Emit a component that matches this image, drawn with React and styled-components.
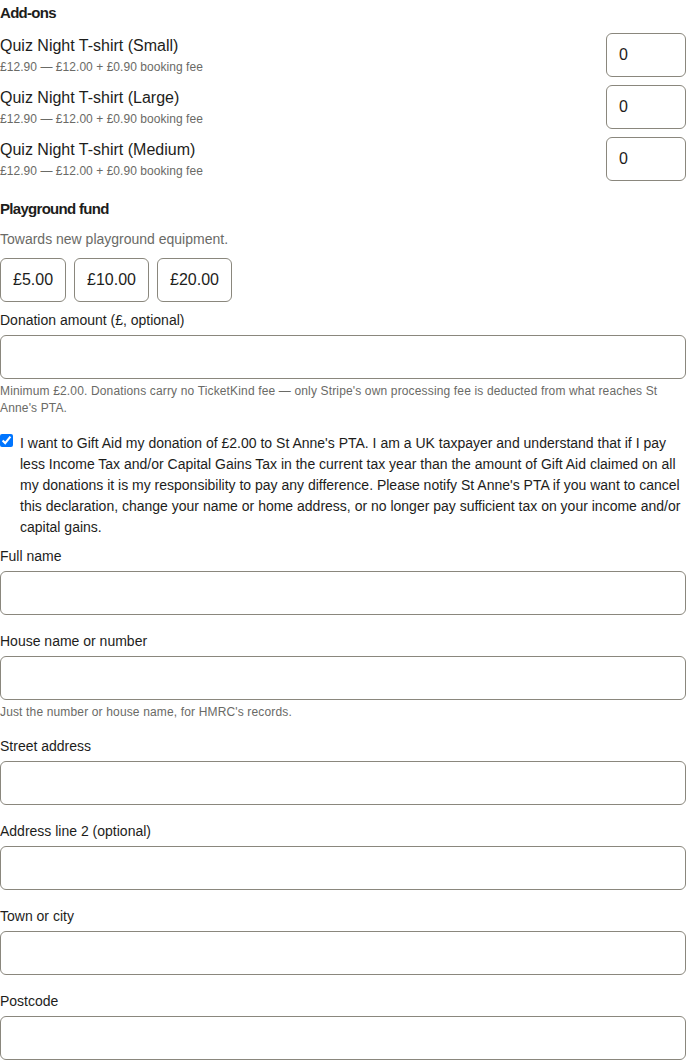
import React from "react";
import styled, { createGlobalStyle } from "styled-components";

const Global = createGlobalStyle`
  html, body { margin: 0; padding: 0; background: #fff; }
  body {
    font-family: "Liberation Sans", Arial, sans-serif;
    color: #1d1d1b;
    -webkit-font-smoothing: antialiased;
  }
  * { box-sizing: border-box; }
`;

const Page = styled.div`
  width: 686px;
  padding-top: 3px;
  display: flex;
  flex-direction: column;
`;

const Heading = styled.h3`
  margin: ${(p) => p.$mt || 0}px 0 0;
  font-family: "Liberation Sans", Arial, sans-serif;
  font-size: 15px;
  font-weight: 700;
  line-height: 20px;
  letter-spacing: -0.7px;
  color: #1d1d1b;
`;

const ItemList = styled.div`
  display: flex;
  flex-direction: column;
  gap: 8px;
  margin-top: 10px;
`;

const ItemRow = styled.div`
  display: flex;
  align-items: center;
  justify-content: space-between;
`;

const ItemText = styled.div`
  display: flex;
  flex-direction: column;
  gap: 2px;
`;

const ItemName = styled.div`
  font-size: 16px;
  line-height: 22px;
`;

const ItemPrice = styled.div`
  font-size: 12px;
  line-height: 16px;
  letter-spacing: 0.05px;
  color: #6a6a66;
`;

const TextInput = styled.input`
  display: block;
  width: ${(p) => (p.$narrow ? "80px" : "100%")};
  height: 44px;
  padding: 0 12px;
  border: 1px solid #8a877d;
  border-radius: 6px;
  background: #fff;
  font-family: "Liberation Sans", Arial, sans-serif;
  font-size: 16px;
  color: #1d1d1b;
  outline: none;
`;

const Intro = styled.p`
  margin: 10px 0 0;
  font-size: 14px;
  line-height: 20px;
  color: #6a6a66;
`;

const PresetRow = styled.div`
  display: flex;
  gap: 8px;
  margin-top: 9px;
`;

const PresetButton = styled.button`
  height: 44px;
  padding: 0 12px;
  border: 1px solid #8a877d;
  border-radius: 6px;
  background: #fff;
  font-family: "Liberation Sans", Arial, sans-serif;
  font-size: 16px;
  color: #1d1d1b;
  cursor: pointer;
`;

const Field = styled.div`
  display: flex;
  flex-direction: column;
  margin-top: ${(p) => p.$mt ?? 16}px;
`;

const Label = styled.label`
  font-size: 14px;
  line-height: 20px;
  margin-bottom: 5px;
  color: #1d1d1b;
`;

const Help = styled.div`
  margin-top: 4px;
  font-size: 12px;
  line-height: 17px;
  letter-spacing: 0.15px;
  color: #6a6a66;
`;

const CheckRow = styled.label`
  display: flex;
  align-items: flex-start;
  margin-top: 16px;
  font-size: 14px;
  line-height: 21px;
  color: #1d1d1b;
`;

const Check = styled.input`
  width: 13px;
  height: 13px;
  margin: 1px 7px 0 0;
  flex: none;
`;

const items = ["Quiz Night T-shirt (Small)", "Quiz Night T-shirt (Large)", "Quiz Night T-shirt (Medium)"];

export default function App() {
  return (
    <Page>
      <Global />
      <Heading>Add-ons</Heading>
      <ItemList>
        {items.map((name) => (
          <ItemRow key={name}>
            <ItemText>
              <ItemName>{name}</ItemName>
              <ItemPrice>£12.90 — £12.00 + £0.90 booking fee</ItemPrice>
            </ItemText>
            <TextInput $narrow type="number" defaultValue="0" />
          </ItemRow>
        ))}
      </ItemList>

      <Heading $mt={18}>Playground fund</Heading>
      <Intro>Towards new playground equipment.</Intro>
      <PresetRow>
        <PresetButton>£5.00</PresetButton>
        <PresetButton>£10.00</PresetButton>
        <PresetButton>£20.00</PresetButton>
      </PresetRow>

      <Field $mt={8}>
        <Label>Donation amount (£, optional)</Label>
        <TextInput type="text" />
        <Help>
          Minimum £2.00. Donations carry no TicketKind fee — only Stripe's own processing fee is deducted from what reaches St Anne's PTA.
        </Help>
      </Field>

      <CheckRow>
        <Check type="checkbox" defaultChecked />
        <span>
          I want to Gift Aid my donation of £2.00 to St Anne's PTA. I am a UK taxpayer and understand that if I pay less Income Tax and/or Capital Gains Tax in the current tax year than the amount of Gift Aid claimed on all my donations it is my responsibility to pay any difference. Please notify St Anne's PTA if you want to cancel this declaration, change your name or home address, or no longer pay sufficient tax on your income and/or capital gains.
        </span>
      </CheckRow>

      <Field $mt={8}>
        <Label>Full name</Label>
        <TextInput type="text" />
      </Field>
      <Field>
        <Label>House name or number</Label>
        <TextInput type="text" />
        <Help>Just the number or house name, for HMRC's records.</Help>
      </Field>
      <Field $mt={15}>
        <Label>Street address</Label>
        <TextInput type="text" />
      </Field>
      <Field>
        <Label>Address line 2 (optional)</Label>
        <TextInput type="text" />
      </Field>
      <Field>
        <Label>Town or city</Label>
        <TextInput type="text" />
      </Field>
      <Field>
        <Label>Postcode</Label>
        <TextInput type="text" />
      </Field>
    </Page>
  );
}
